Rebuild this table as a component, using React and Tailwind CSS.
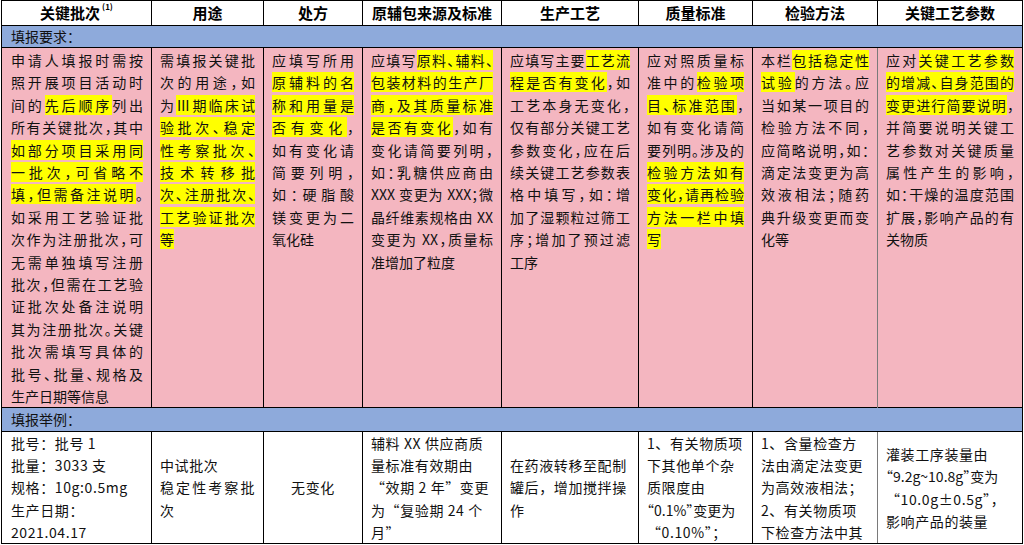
const COLS = 'grid grid-cols-[150px_112px_99px_139px_137px_114px_125px_145px]'

const HEADERS = ['关键批次', '用途', '处方', '原辅包来源及标准', '生产工艺', '质量标准', '检验方法', '关键工艺参数']

// [..] marks highlighted text
const REQUIREMENTS = [
  ['申请人填报时需按', '照开展项目活动时', '间的[先后顺序]列出', '所有关键批次，其中', '[如部分项目采用同]', '[一批次，可省略不]', '[填，但需备注说明]。', '如采用工艺验证批', '次作为注册批次，可', '无需单独填写注册', '批次，但需在工艺验', '证批次处备注说明', '其为注册批次。关键', '批次需填写具体的', '批号、批量、规格及', '生产日期等信息'],
  ['需填报关键批', '次的用途，如', '为[Ⅲ期临床试]', '[验批次、稳定]', '[性考察批次、]', '[技术转移批]', '[次、注册批次、]', '[工艺验证批次]', '[等]'],
  ['应填写所用', '[原辅料的名]', '[称和用量是]', '[否有变化]，', '如有变化请', '简要列明，', '如：硬脂酸', '镁变更为二', '氧化硅'],
  ['应填写[原料、辅料、]', '[包装材料的生产厂]', '[商，及其质量标准]', '[是否有变化]，如有', '变化请简要列明，', '如：乳糖供应商由', 'XXX 变更为 XXX；微', '晶纤维素规格由 XX', '变更为 XX，质量标', '准增加了粒度'],
  ['应填写主要[工艺流]', '[程是否有变化]，如', '工艺本身无变化，', '仅有部分关键工艺', '参数变化，应在后', '续关键工艺参数表', '格中填写，如：增', '加了湿颗粒过筛工', '序；增加了预过滤', '工序'],
  ['应对照质量标', '准中的[检验项]', '[目、标准范围]，', '如有变化请简', '要列明。涉及的', '[检验方法如有]', '[变化，请再检验]', '[方法一栏中填]', '[写]'],
  ['本栏[包括稳定性]', '[试验]的方法。应', '当如某一项目的', '检验方法不同，', '应简略说明，如：', '滴定法变更为高', '效液相法；随药', '典升级变更而变', '化等'],
  ['应对[关键工艺参数]', '[的增减、自身范围的]', '[变更进行简要说明]，', '并简要说明关键工', '艺参数对关键质量', '属性产生的影响，', '如：干燥的温度范围', '扩展，影响产品的有', '关物质'],
]

// "!" = justified line, "~" = compact punctuation
const EXAMPLES = [
  { lines: ['批号：批号 1', '批量：3033 支', '规格：10g:0.5mg', '生产日期：', '2021.04.17'] },
  { lines: ['中试批次', '!稳定性考察批', '次'] },
  { lines: ['无变化'], center: true },
  { lines: ['辅料 XX 供应商质', '量标准有效期由', '“效期 2 年”变更', '为“复验期 24 个', '月”'] },
  { lines: ['在药液转移至配制', '罐后，增加搅拌操', '作'] },
  { lines: ['1、有关物质项', '下其他单个杂', '质限度由', '~“0.1%”变更为', '“0.10%”；'] },
  { lines: ['1、含量检查方', '法由滴定法变更', '为高效液相法；', '2、有关物质项', '下检查方法中其'] },
  { lines: ['灌装工序装量由', '~“9.2g~10.8g”变为', '“10.0g±0.5g”，', '影响产品的装量'] },
]

function border(i) {
  return i === 6 ? 'border-r border-r-[#7a7a7a]' : 'border-r border-black'
}

function Line({ text, last }) {
  const parts = text.split(/(\[[^\]]+\])/).filter(Boolean)
  return (
    <div className={last ? 'text-left' : 'text-justify [text-align-last:justify]'}>
      {parts.map((p, i) =>
        p.startsWith('[') ? (
          <span key={i} className="bg-[#ffff00]">{p.slice(1, -1)}</span>
        ) : (
          <span key={i}>{p}</span>
        )
      )}
    </div>
  )
}

function ExampleLine({ text }) {
  if (text.startsWith('!')) {
    return <div className="text-justify [text-align-last:justify]">{text.slice(1)}</div>
  }
  if (text.startsWith('~')) {
    return <div className="whitespace-nowrap tracking-normal [font-feature-settings:'halt']">{text.slice(1)}</div>
  }
  return <div className="whitespace-nowrap">{text}</div>
}

export default function App() {
  return (
    <div className="ml-px w-[1022px] border-l border-t border-black bg-white font-['Noto_Sans_CJK_SC',sans-serif] text-[#111]">
      <div className={`${COLS} h-[25px] border-b border-black`}>
        {HEADERS.map((h, i) => (
          <div key={h} className="flex items-center justify-center border-r border-black text-[15px] font-bold text-black">
            {h}
            {i === 0 && <span className="ml-0.5 -translate-y-1.5 text-[8px] leading-none">(1)</span>}
          </div>
        ))}
      </div>

      <div className="flex h-[22px] items-center border-b border-r border-black bg-[#8eaadb] pl-[9px] text-[14px]">
        填报要求：
      </div>

      <div className={`${COLS} h-[360px] border-b border-black bg-[#f4b6c0] text-[14px] leading-[22.4px] [font-feature-settings:'halt']`}>
        {REQUIREMENTS.map((lines, i) => (
          <div key={i} className={`${border(i)} pt-px pr-2 ${i === 0 ? 'pl-[9px]' : 'pl-2'}`}>
            {lines.map((l, j) => (
              <Line key={j} text={l} last={j === lines.length - 1} />
            ))}
          </div>
        ))}
      </div>

      <div className="flex h-[24px] items-center border-b border-r border-black bg-[#8eaadb] pl-[9px] text-[14px]">
        填报举例：
      </div>

      <div className={`${COLS} h-[112px] border-b border-black text-[14px] leading-[22.2px] tracking-[0.6px]`}>
        {EXAMPLES.map((c, i) => (
          <div
            key={i}
            className={`${border(i)} flex flex-col justify-center overflow-hidden pr-2 ${i === 0 ? 'pl-[9px]' : 'pl-2'} ${c.center ? 'items-center' : ''}`}
          >
            {c.lines.map((l, j) => (
              <ExampleLine key={j} text={l} />
            ))}
          </div>
        ))}
      </div>
    </div>
  )
}
